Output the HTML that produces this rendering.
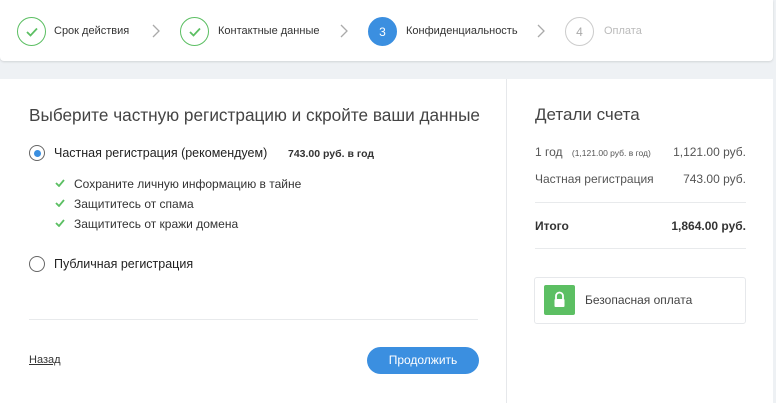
<!DOCTYPE html>
<html><head><meta charset="utf-8"><style>
*{margin:0;padding:0;box-sizing:border-box}
body{width:776px;height:403px;background:#eef1f4;font-family:"Liberation Sans","Noto Sans CJK SC",sans-serif;color:#333;position:relative;overflow:hidden}
.top{position:absolute;left:0;top:0;width:773px;height:61px;background:#fff;border-radius:0 0 4px 4px;box-shadow:0 1px 2px rgba(0,0,0,.12)}
.c{position:absolute;top:17px;width:29px;height:29px;border-radius:50%;border:1px solid #5cbf63;display:flex;align-items:center;justify-content:center;font-size:12px}
.lbl{position:absolute;top:25px;font-size:11px;color:#333}
.chev{position:absolute;top:24px}
.main{position:absolute;left:0;top:79px;width:773px;height:324px;background:#fff}
.div{position:absolute;left:506px;top:79px;width:1px;height:324px;background:#e6e8eb}
.a{position:absolute;white-space:nowrap}
</style></head><body>
<div class="top">
<div class="c" style="left:17px"><svg width="12" height="10"><path d="M1 5l3.5 3.5L11 1.5" stroke="#5cbf63" stroke-width="1.8" fill="none"/></svg></div>
<div class="lbl" style="left:54px">Срок действия</div>
<svg class="chev" style="left:152px" width="9" height="14"><path d="M1 1l6 6-6 6" stroke="#aaa" stroke-width="1.3" fill="none"/></svg>
<div class="c" style="left:180px"><svg width="12" height="10"><path d="M1 5l3.5 3.5L11 1.5" stroke="#5cbf63" stroke-width="1.8" fill="none"/></svg></div>
<div class="lbl" style="left:218px">Контактные данные</div>
<svg class="chev" style="left:340px" width="9" height="14"><path d="M1 1l6 6-6 6" stroke="#aaa" stroke-width="1.3" fill="none"/></svg>
<div class="c" style="left:368px;background:#3b8fe0;border-color:#3b8fe0;color:#fff">3</div>
<div class="lbl" style="left:406px">Конфиденциальность</div>
<svg class="chev" style="left:537px" width="9" height="14"><path d="M1 1l6 6-6 6" stroke="#aaa" stroke-width="1.3" fill="none"/></svg>
<div class="c" style="left:565px;border-color:#ccc;color:#aaa">4</div>
<div class="lbl" style="left:604px;color:#bbb">Оплата</div>
</div>
<div class="main"></div>
<div class="div"></div>
<div class="a" style="left:29px;top:105px;font-size:17.2px;color:#444">Выберите частную регистрацию и скройте ваши данные</div>
<div class="a" style="left:29px;top:145px;width:16px;height:16px;border-radius:50%;border:1px solid #666"><div style="position:absolute;left:3.5px;top:3.5px;width:7px;height:7px;border-radius:50%;background:#3b8fe0"></div></div>
<div class="a" style="left:54px;top:146px;font-size:12.5px;color:#222">Частная регистрация (рекомендуем)</div>
<div class="a" style="left:288px;top:148px;font-size:10.5px;font-weight:bold;color:#333">743.00 руб. в год</div>
<svg class="a" style="left:55px;top:179px" width="10" height="8"><path d="M1 4l3 3 5-6" stroke="#5cbf63" stroke-width="1.8" fill="none"/></svg>
<div class="a" style="left:74px;top:177px;font-size:12px;color:#333">Сохраните личную информацию в тайне</div>
<svg class="a" style="left:55px;top:199px" width="10" height="8"><path d="M1 4l3 3 5-6" stroke="#5cbf63" stroke-width="1.8" fill="none"/></svg>
<div class="a" style="left:74px;top:197px;font-size:12px;color:#333">Защититесь от спама</div>
<svg class="a" style="left:55px;top:219px" width="10" height="8"><path d="M1 4l3 3 5-6" stroke="#5cbf63" stroke-width="1.8" fill="none"/></svg>
<div class="a" style="left:74px;top:217px;font-size:12px;color:#333">Защититесь от кражи домена</div>
<div class="a" style="left:29px;top:256px;width:16px;height:16px;border-radius:50%;border:1px solid #666"></div>
<div class="a" style="left:54px;top:257px;font-size:12.5px;color:#222">Публичная регистрация</div>
<div class="a" style="left:29px;top:319px;width:449px;height:1px;background:#e8eaec"></div>
<div class="a" style="left:29px;top:354px;font-size:11px;color:#333;text-decoration:underline">Назад</div>
<div class="a" style="left:367px;top:347px;width:112px;height:27px;border-radius:14px;background:#3b8fe0;color:#fff;font-size:12px;text-align:center;line-height:27px">Продолжить</div>
<div class="a" style="left:535px;top:105px;font-size:17px;color:#444">Детали счета</div>
<div class="a" style="left:535px;top:145px;font-size:12px;color:#555">1 год <span style="font-size:8.5px;margin-left:6px">(1,121.00 руб. в год)</span></div>
<div class="a" style="right:30px;top:145px;font-size:12px;color:#555">1,121.00 руб.</div>
<div class="a" style="left:535px;top:172px;font-size:12px;color:#555">Частная регистрация</div>
<div class="a" style="right:30px;top:172px;font-size:12px;color:#555">743.00 руб.</div>
<div class="a" style="left:535px;top:202px;width:211px;height:1px;background:#e8eaec"></div>
<div class="a" style="left:535px;top:219px;font-size:12px;font-weight:bold;color:#333">Итого</div>
<div class="a" style="right:30px;top:219px;font-size:12px;font-weight:bold;color:#333">1,864.00 руб.</div>
<div class="a" style="left:535px;top:248px;width:211px;height:1px;background:#e8eaec"></div>
<div class="a" style="left:534px;top:277px;width:212px;height:47px;border:1px solid #e6e8eb;border-radius:3px"></div>
<div class="a" style="left:544px;top:285px;width:31px;height:30px;background:#5cbf63;border-radius:2px"><svg width="31" height="30"><path d="M12 14v-3a3.5 3.5 0 0 1 7 0v3" stroke="#fff" stroke-width="1.8" fill="none"/><rect x="10.5" y="14" width="10" height="8" rx="1" fill="#fff"/></svg></div>
<div class="a" style="left:585px;top:293px;font-size:12px;color:#444">Безопасная оплата</div>
</body></html>
